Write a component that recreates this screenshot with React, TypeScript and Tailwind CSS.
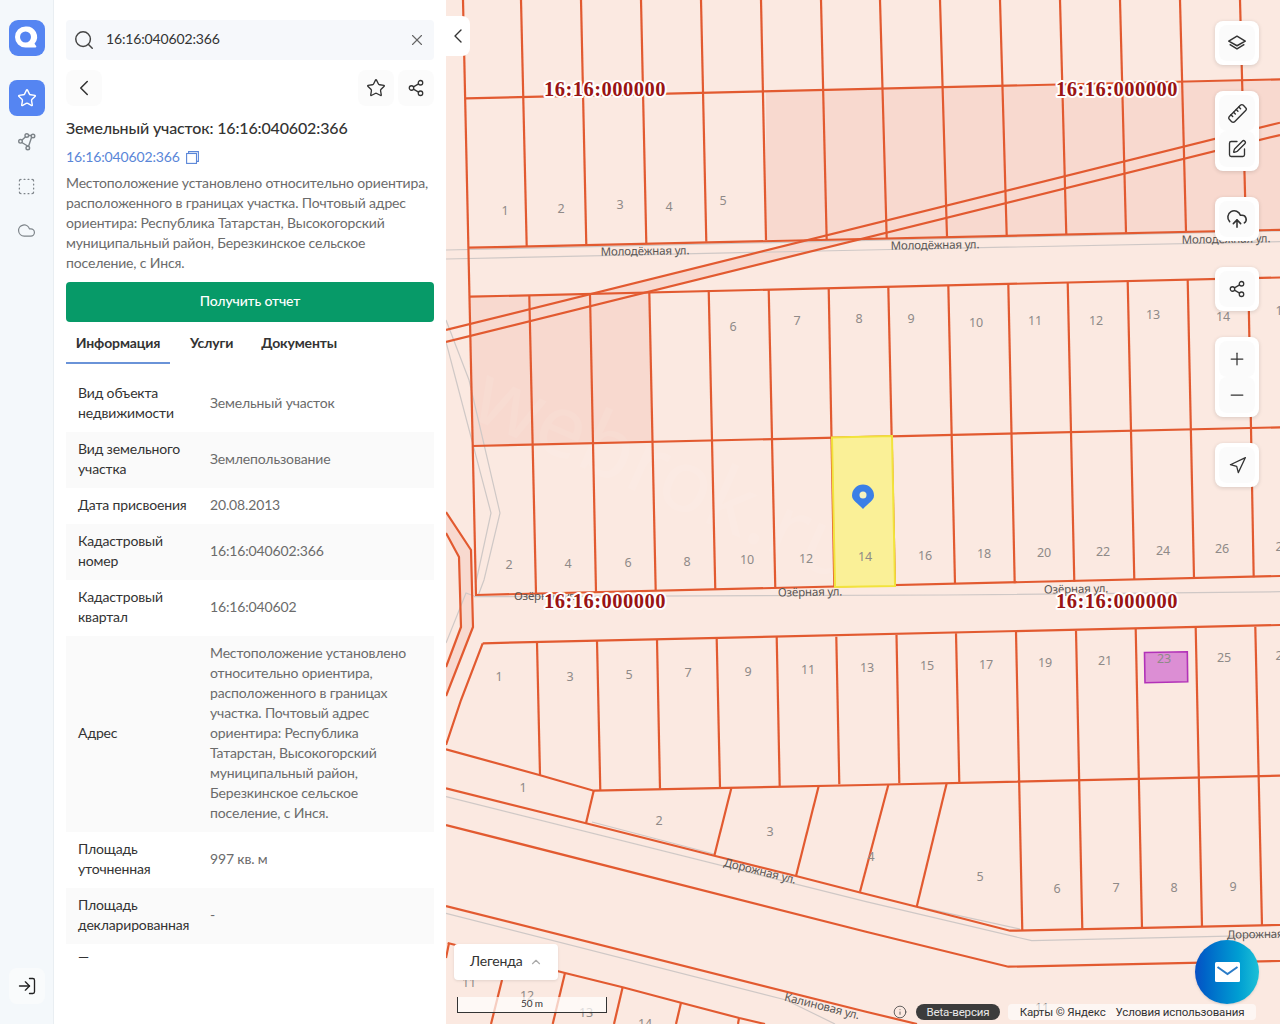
import React from "react";
import { Search, X, ChevronLeft, ChevronUp, Star, Share2, SquarePen, CloudUpload, Plus, Minus, Navigation, LogIn, Cloud, SquareDashed, Ruler, Info } from "lucide-react";

const rows: [string, string][] = [
  ["Вид объекта недвижимости", "Земельный участок"],
  ["Вид земельного участка", "Землепользование"],
  ["Дата присвоения", "20.08.2013"],
  ["Кадастровый номер", "16:16:040602:366"],
  ["Кадастровый квартал", "16:16:040602"],
  ["Адрес", "Местоположение установлено относительно ориентира, расположенного в границах участка. Почтовый адрес ориентира: Республика Татарстан, Высокогорский муниципальный район, Березкинское сельское поселение, с Инся."],
  ["Площадь уточненная", "997 кв. м"],
  ["Площадь декларированная", "-"],
];

const L = "#e25a30";
type Seg = [number, number, number, number];
const vertA: Seg[] = [[521,0,526.7,246],[581,0,586.3,245],[641,0,646.3,243],[701,0,706.3,241.7],[761,0,766,240],[821,0,826.7,240],[880,0,886.7,238],[940,0,947,236.7],[1000,0,1006.7,235],[1060,0,1066.3,234.7],[1120,0,1126,232.7],[1180,0,1186,231.7],[1240,0,1246,231]];
const vertB: Seg[] = [[529.3,296,536,593],[590,295,596,592],[649.3,291.7,655.7,590.7],[708.7,290,715.3,590],[768.7,289.3,775.3,588.3],[828.7,288.3,834.3,587],[888.3,286.7,895,586],[948.3,285,955,584],[1008.3,284,1014.7,583.3],[1067.7,282,1074.3,581.7],[1127.7,281.5,1134.3,580],[1187.7,280,1194,578.3],[1248.3,279,1253.7,577.3]];
const vertC: Seg[] = [[537,642.7,540,775],[597,641,600.3,790],[657,640,660,788.7],[716.7,639,720,787.3],[776.7,637,779.7,786.7],[836.3,636.7,839.3,784.3],[896.5,635,899.3,783.3],[956,633.3,959.3,782.3],[1016,632,1022.3,930.7],[1076,630.7,1082.3,929.3],[1135.7,629,1142,928.3],[1195.7,628,1202,926.7],[1255.3,626.7,1262,925.7]];
const other: Seg[] = [
  [463,0,476,596],[466,98.4,1280,79.3],[468.7,247.7,1280,229.8],[470,296.7,1280,277.5],[472.7,446,1280,427.3],[476,595,1280,576],
  [482.7,643.3,1280,625],[593.7,790.7,586,823.3],[731.3,788.3,714.3,855.7],[818.7,786,796,876],[888.3,785,860,891.7],[946.7,783.3,916.7,906.7],
  [502,980,491,1024],[565,973,552.7,1024],[622.7,987,614,1024],[681,1002.7,676,1024],[739,1018,738,1024],[449,943,446,958],
  [446,330,1280,122.7],[446,342,1280,135],
];
const polys: string[] = [
  "482.7,643.3 461,700 446,745",
  "446,749.3 539.3,775 593.7,790.7 866,785 1280,775.7",
  "446,788.3 586,823.3 714.3,855.7 796,876 861,892.7 916.7,906.7 1010,930.7 1280,925",
  "446,825 866,931.7 1008.3,966.7 1280,961",
  "446,906 866,1011.7 917,1024",
  "447.7,943 566,973.3 622.7,987.3 681,1002.7 739.3,1018 765,1024",
  "446,512 471,550 473,627 446,696",
  "446,533 459,557 461,627 446,667",
];
const greys: string[] = [
  "446,250 1280,231",
  "446,259 866,250 1280,241.7",
  "474,596.7 946,595 1280,591.7",
  "446,796.7 866,901.7 1031.7,940.7 1280,935",
  "446,913.3 786,1000 835,1024",
  "592,822 714,854",
  "918,906.7 1020,929",
  "446,342 456,380 491,513 476,582",
  "446,320 469,380 500,513 484,580 478,596",
  "446,643 466,593 474,596",
];
const nums: [string, number, number][] = [
  ["1",505,211],["2",561,209],["3",620,205],["4",669,207],["5",723,201],
  ["6",733,327],["7",797,321],["8",859,319],["9",911,319],["10",976,323],["11",1035,321],["12",1096,321],["13",1153,315],["14",1223,317],["1",1279,311],
  ["2",509,565],["4",568,564],["6",628,563],["8",687,562],["10",747,560],["12",806,559],["14",865,557],["16",925,556],["18",984,554],["20",1044,553],["22",1103,552],["24",1163,551],["26",1222,549],["2",1279,547],
  ["1",499,677],["3",570,677],["5",629,675],["7",688,673],["9",748,672],["11",808,670],["13",867,668],["15",927,666],["17",986,665],["19",1045,663],["21",1105,661],["23",1164,659],["25",1224,658],["2",1279,656],
  ["1",523,788],["2",659,821],["3",770,832],["4",871,857],["5",980,877],["6",1057,889],["7",1116,888],["8",1174,888],["9",1233,887],
  ["11",469,983],["12",527,996],["13",586,1013],["14",645,1024],["11",1042,1008],
];
const streets: [string, number, number, number][] = [
  ["Молодёжная ул.",645,251,-1],["Молодёжная ул.",935,245,-1],["Молодёжная ул.",1226,239,-1],
  ["Озёрная ул.",546,596,0],["Озёрная ул.",810,592,-1],["Озёрная ул.",1076,589,-1],
  ["Дорожная ул.",760,871,14],["Дорожная ул.",1264,934,-1],["Калиновая ул.",822,1006,14],
];
const cad: [number, number][] = [[605,89],[1117,89],[605,601],[1117,601]];

function MapDrawing() {
  return (
    <svg viewBox="446 0 834 1024" className="absolute inset-0 w-full h-full">
      <rect x="446" y="0" width="834" height="1024" fill="#fbe9e1" />
      <polygon points="766,91.5 1280,79.3 1280,229.8 766,240" fill="#f8d9cf" />
      <polygon points="470,296.7 649.3,291.7 652.5,442 472.7,446" fill="#f8d9cf" />
      <polygon points="590,294 866,226 866,238.3 649.3,291.7" fill="#f8d9cf" />
      <polygon points="446,512 471,550 473,627 446,696 446,667 461,627 459,557 446,533" fill="#f8d9cf" />
      <text x="655" y="500" fontSize="86" fill="#ffffff" fillOpacity="0.08" fontFamily="'Noto Sans', sans-serif" textAnchor="middle" transform="rotate(24 655 500)">webrok.ru</text>
      {greys.map((p, i) => <polyline key={i} points={p} fill="none" stroke="#cfc8c6" strokeWidth="1.2" />)}
      {[...vertA, ...vertB, ...vertC, ...other].map((s, i) => (
        <line key={i} x1={s[0]} y1={s[1]} x2={s[2]} y2={s[3]} stroke={L} strokeWidth="2.2" />
      ))}
      {polys.map((p, i) => <polyline key={i} points={p} fill="none" stroke={L} strokeWidth="2.2" />)}
      <polygon points="832,437.5 892,436 895,586 835,587" fill="#faf097" stroke="#f2e33c" strokeWidth="2" />
      <polygon points="1144.5,652.5 1187.3,651.7 1187.7,681.7 1145,682.7" fill="#dc8ed4" stroke="#b232b8" strokeWidth="1.6" />
      {nums.map(([t, x, y], i) => (
        <text key={i} x={x} y={y + 4} fontSize="12.5" textAnchor="middle" fill="#8f8a88" fontFamily="'Noto Sans', sans-serif">{t}</text>
      ))}
      {streets.map(([t, x, y, r], i) => (
        <text key={i} x={x} y={y + 4} fontSize="11.5" textAnchor="middle" fill="#595654" fontFamily="'Noto Sans', sans-serif" transform={`rotate(${r} ${x} ${y})`}>{t}</text>
      ))}
      {cad.map(([x, y], i) => (
        <text key={i} x={x} y={y + 7} fontSize="20.5" letterSpacing="0.5" fontWeight="700" textAnchor="middle" fill="#9a1414" stroke="#ffffff" strokeWidth="4" paintOrder="stroke" strokeLinejoin="round" fontFamily="'Liberation Serif', serif">16:16:000000</text>
      ))}
      <path d="M863 509 C858 503 852 501 852 495.5 A11 11 0 0 1 874 495.5 C874 501 868 503 863 509 Z" fill="#3b7fe6" />
      <circle cx="863" cy="495" r="3.5" fill="#f7f3c0" />
    </svg>
  );
}

function Logo() {
  return (
    <svg viewBox="0 0 36 36" className="w-9 h-9">
      <rect width="36" height="36" rx="9" fill="#5585f2" />
      <path d="M16.500 6.500a10.500 10.500 0 1 0 0 21H26.500c.8 0 1.100-.9.600-1.500l-1.600-2.200A10.500 10.500 0 0 0 16.500 6.500Z" fill="#ffffff" />
      <circle cx="16.500" cy="17" r="5.500" fill="#5585f2" />
    </svg>
  );
}

function NodesIcon() {
  return (
    <svg viewBox="0 0 20 20" className="w-5 h-5" fill="none" stroke="#7d8489" strokeWidth="1.4">
      <path d="M4.500 8.500 10 3.500h5.200L11.500 14.500 4 10" />
      <circle cx="3.500" cy="9.300" r="1.800" fill="#f4f8fb" />
      <circle cx="9.800" cy="3.500" r="1.800" fill="#f4f8fb" />
      <circle cx="16" cy="4" r="1.800" fill="#f4f8fb" />
      <circle cx="10.800" cy="16" r="1.800" fill="#f4f8fb" />
    </svg>
  );
}

function LayersIcon() {
  return (
    <svg viewBox="0 0 24 24" className="w-[22px] h-[22px]" fill="none" stroke="#333" strokeWidth="1.6" strokeLinejoin="round">
      <path d="M12 4.500 21 10l-9 5-9-5Z" />
      <path d="M4 13.500 12 18.500l8-5" />
    </svg>
  );
}

function CopyIcon() {
  return (
    <svg viewBox="0 0 13 13" className="w-[13px] h-[13px]" fill="none" stroke="#5a86d8" strokeWidth="1.100">
      <rect x="0.600" y="2.500" width="9.900" height="9.900" />
      <path d="M2.600 2.500V.6h9.800v9.800h-1.900" />
    </svg>
  );
}

const Ctl = ({ children }: { children: React.ReactNode }) => (
  <div className="w-9 h-9 flex items-center justify-center rounded-lg bg-[#fbfbfb] text-[#333333]">{children}</div>
);
const Group = ({ children }: { children: React.ReactNode }) => (
  <div className="w-11 p-1 flex flex-col gap-0 items-center rounded-lg bg-white shadow-[0_1px_4px_rgba(0,0,0,0.14)]">{children}</div>
);

export default function App() {
  return (
    <div className="flex w-[1280px] h-[1024px] overflow-hidden bg-white font-['Lato','Open_Sans',sans-serif] text-sm tracking-[-0.15px] text-[#333333]">
      <aside className="w-[54px] shrink-0 h-full flex flex-col items-center pr-[9px] pl-[9px] pt-5 pb-5 bg-[#f4f8fb] border-r border-[#e9eef2]">
        <Logo />
        <div className="mt-6 flex flex-col gap-2">
          <div className="w-9 h-9 rounded-lg bg-[#5585f2] flex items-center justify-center">
            <Star size={20} color="#ffffff" strokeWidth={1.7} />
          </div>
          <div className="w-9 h-9 flex items-center justify-center"><NodesIcon /></div>
          <div className="w-9 h-9 flex items-center justify-center"><SquareDashed size={19} color="#7d8489" strokeWidth={1.6} /></div>
          <div className="w-9 h-9 flex items-center justify-center"><Cloud size={19} color="#7d8489" strokeWidth={1.5} /></div>
        </div>
        <div className="mt-auto w-9 h-9 rounded-lg bg-[#f9fbfc] flex items-center justify-center">
          <LogIn size={20} color="#222222" strokeWidth={1.6} />
        </div>
      </aside>

      <section className="w-[392px] shrink-0 h-full pl-3 pr-3 pt-5 bg-white overflow-hidden">
        <div className="h-10 flex items-center rounded bg-[#f6f8fb] pl-[7px] pr-[8px]">
          <Search size={22} color="#444444" strokeWidth={1.6} />
          <span className="ml-[11px] flex-1 pb-[2px]">16:16:040602:366</span>
          <X size={18} color="#666666" strokeWidth={1.5} />
        </div>
        <div className="mt-[10px] flex items-center justify-between">
          <div className="w-9 h-9 rounded-lg bg-[#fbfbfb] flex items-center justify-center"><ChevronLeft size={26} color="#333" strokeWidth={1.4} /></div>
          <div className="flex gap-1">
            <div className="w-9 h-9 rounded-lg bg-[#fbfbfb] flex items-center justify-center"><Star size={20} color="#333" strokeWidth={1.6} /></div>
            <div className="w-9 h-9 rounded-lg bg-[#fbfbfb] flex items-center justify-center"><Share2 size={18} color="#333" strokeWidth={1.7} /></div>
          </div>
        </div>
        <h1 className="mt-[10px] text-base leading-6 font-medium">Земельный участок: 16:16:040602:366</h1>
        <div className="mt-[7px] h-5 flex items-center gap-[6px] text-[#5a86d8]">
          <span>16:16:040602:366</span>
          <CopyIcon />
        </div>
        <p className="mt-[6px] leading-5 text-[#6b6b6b]">Местоположение установлено относительно ориентира, расположенного в границах участка. Почтовый адрес ориентира: Республика Татарстан, Высокогорский муниципальный район, Березкинское сельское поселение, с Инся.</p>
        <button className="mt-[9px] w-full h-10 rounded bg-[#079a68] text-white font-medium pb-[3px]">Получить отчет</button>
        <div className="flex h-[42px] gap-5">
          <div className="w-[104px] border-b-2 border-[#6a93d8] flex items-center justify-center font-bold pt-[2px]">Информация</div>
          <div className="flex items-center font-bold">Услуги</div>
          <div className="ml-2 flex items-center font-bold">Документы</div>
        </div>
        <div className="mt-3">
          {rows.map(([k, v], i) => (
            <div key={i} className="flex items-center px-3 pt-[7px] pb-[9px] leading-5 even:bg-[#fafafa]">
              <div className="w-[132px] shrink-0 pr-2 text-[#333333]">{k}</div>
              <div className="flex-1 text-[#6b6b6b]">{v}</div>
            </div>
          ))}
        </div>
        <div className="mt-[3px] pl-3 leading-5">—</div>
      </section>

      <main className="relative flex-1 h-full overflow-hidden">
        <MapDrawing />
        <div className="absolute left-0 top-4 w-6 h-10 rounded-r-lg bg-white flex items-center justify-center">
          <ChevronLeft size={26} color="#333" strokeWidth={1.4} />
        </div>
        <div className="absolute right-[21px] top-[21px] flex flex-col gap-[26px]">
          <Group><Ctl><LayersIcon /></Ctl></Group>
          <Group><Ctl><Ruler size={21} strokeWidth={1.6} className="-scale-x-100" /></Ctl><Ctl><SquarePen size={20} strokeWidth={1.6} /></Ctl></Group>
          <Group><Ctl><CloudUpload size={22} strokeWidth={1.7} /></Ctl></Group>
          <Group><Ctl><Share2 size={18} strokeWidth={1.7} /></Ctl></Group>
          <Group><Ctl><Plus size={20} strokeWidth={1.5} /></Ctl><Ctl><Minus size={20} strokeWidth={1.5} /></Ctl></Group>
          <Group><Ctl><Navigation size={19} strokeWidth={1.6} /></Ctl></Group>
        </div>
        <div className="absolute left-2 top-[944px] w-[104px] h-9 rounded bg-white shadow-[0_1px_3px_rgba(0,0,0,0.1)] flex items-center pl-4 gap-[6px]">
          <span className="pb-[2px]">Легенда</span>
          <ChevronUp size={14} color="#aaaaaa" />
        </div>
        <div className="absolute left-[11px] top-[997px] w-[150px] h-[16px] bg-white/70 border-b border-l border-r border-[#333333] text-center text-[10px] leading-[13px]">50 m</div>
        <div className="absolute left-[447px] top-[1003px] w-[370px] h-[18px] flex items-center text-[11.500px] font-['Roboto',sans-serif]">
          <Info size={14} color="#444444" strokeWidth={1.4} />
          <span className="ml-[9px] h-4 w-[84px] rounded-lg bg-[#3c3c3c] text-[#e8e8e8] flex items-center justify-center">Beta-версия</span>
          <span className="ml-2 h-4 w-[248px] rounded-sm bg-white/60 text-[#333333] flex items-center justify-center gap-[10px]"><span>Карты © Яндекс</span><span>Условия использования</span></span>
        </div>
        <div className="absolute left-[749px] top-[940px] w-16 h-16 rounded-full bg-gradient-to-r from-[#0a50c4] to-[#1cc0d6] shadow flex items-center justify-center">
          <svg viewBox="0 0 25 20" className="w-[25px] h-5">
            <rect width="25" height="20" rx="1.500" fill="#ffffff" />
            <path d="M2.500 5 12.500 12 22.500 5" fill="none" stroke="#2a7cc8" strokeWidth="2" />
          </svg>
        </div>
      </main>
    </div>
  );
}
